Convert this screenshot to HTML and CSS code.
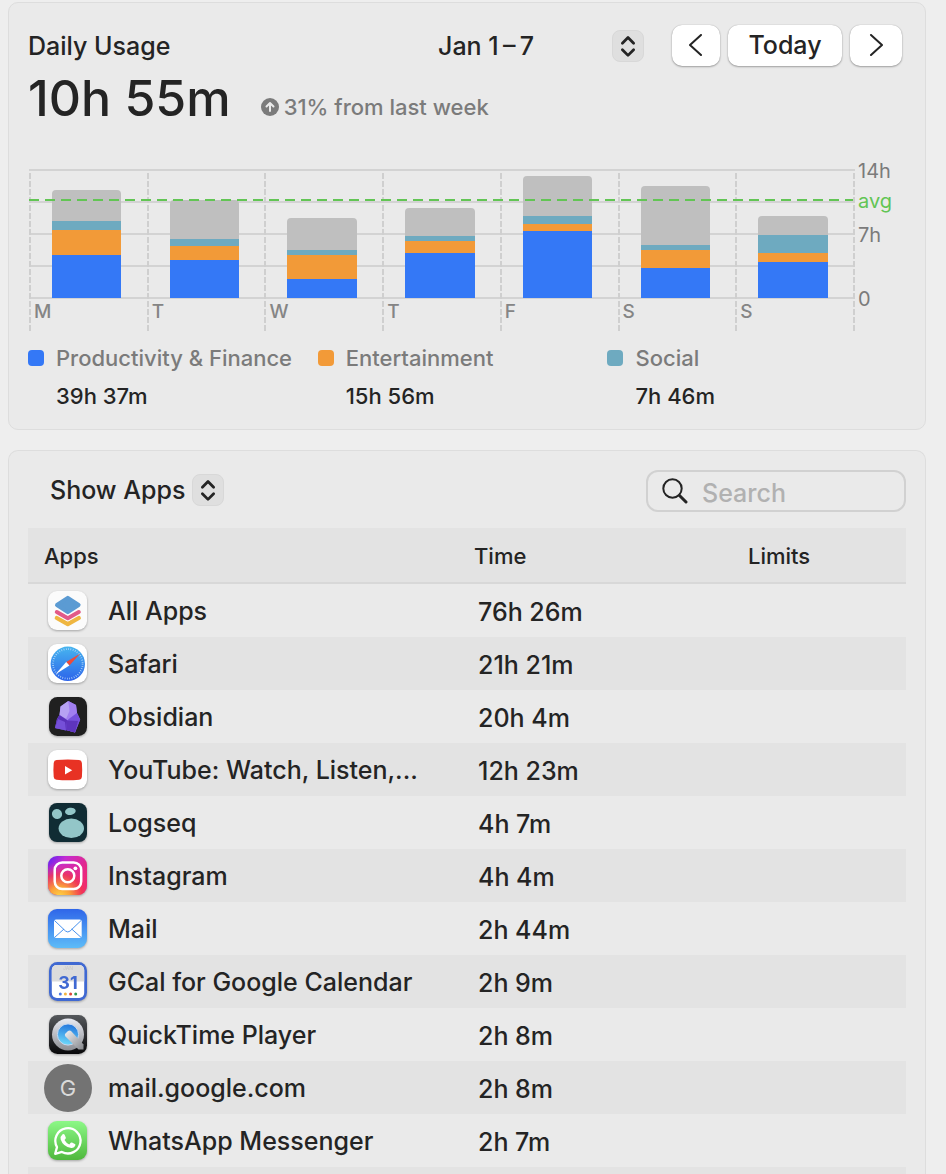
FILE: index.html
```html
<!DOCTYPE html>
<html lang="en">
<head>
<meta charset="utf-8">
<meta name="viewport" content="width=device-width, initial-scale=1">
<title>Screen Time</title>
<link rel="stylesheet" href="styles.css">
</head>
<body>
<section class="card usage">
  <header class="usage-head">
    <h1 class="title">Daily Usage</h1>
    <div class="popup popup-week">
      <select class="popup-select" aria-label="Week"><option>Jan 1&#8201;–&#8201;7</option></select>
      <svg class="stepper" viewBox="0 0 32 32" aria-hidden="true"><path d="M10 13l6-6 6 6M10 20l6 6 6-6"/></svg>
    </div>
    <nav class="pager" aria-label="Week navigation">
      <button class="btn btn-prev" aria-label="Previous week"><svg class="chevron" viewBox="0 0 14 22"><path d="M12 1L1 11l11 10"/></svg></button>
      <button class="btn btn-today">Today</button>
      <button class="btn btn-next" aria-label="Next week"><svg class="chevron" viewBox="0 0 14 22"><path d="M2 1l11 10L2 21"/></svg></button>
    </nav>
  </header>
  <div class="summary">
    <strong class="total">10h 55m</strong>
    <span class="delta"><svg class="delta-icon" viewBox="0 0 18 18" aria-hidden="true"><circle cx="9" cy="9" r="9"/><path d="M9 13V5M5.500 8.500L9 5l3.500 3.500"/></svg>31% from last week</span>
  </div>

  <div class="chart">
    <div class="plot">
      <div class="day"><div class="bar"><i class="other" style="height:31px"></i><i class="social" style="height:9px"></i><i class="fun" style="height:25px"></i><i class="work" style="height:43px"></i></div><span class="day-name">M</span></div>
      <div class="day"><div class="bar"><i class="other" style="height:39px"></i><i class="social" style="height:7px"></i><i class="fun" style="height:14px"></i><i class="work" style="height:38px"></i></div><span class="day-name">T</span></div>
      <div class="day"><div class="bar"><i class="other" style="height:32px"></i><i class="social" style="height:5px"></i><i class="fun" style="height:24px"></i><i class="work" style="height:19px"></i></div><span class="day-name">W</span></div>
      <div class="day"><div class="bar"><i class="other" style="height:28px"></i><i class="social" style="height:5px"></i><i class="fun" style="height:12px"></i><i class="work" style="height:45px"></i></div><span class="day-name">T</span></div>
      <div class="day"><div class="bar"><i class="other" style="height:40px"></i><i class="social" style="height:8px"></i><i class="fun" style="height:7px"></i><i class="work" style="height:67px"></i></div><span class="day-name">F</span></div>
      <div class="day"><div class="bar"><i class="other" style="height:59px"></i><i class="social" style="height:5px"></i><i class="fun" style="height:18px"></i><i class="work" style="height:30px"></i></div><span class="day-name">S</span></div>
      <div class="day"><div class="bar"><i class="other" style="height:19px"></i><i class="social" style="height:18px"></i><i class="fun" style="height:9px"></i><i class="work" style="height:36px"></i></div><span class="day-name">S</span></div>
      <div class="average"></div>
    </div>
    <div class="scale"><span>14h</span><span class="avg-label">avg</span><span class="scale-mid">7h</span><span class="scale-zero">0</span></div>
  </div>

  <dl class="legend">
    <div class="legend-item"><dt><i class="swatch work"></i>Productivity &amp; Finance</dt><dd>39h 37m</dd></div>
    <div class="legend-item"><dt><i class="swatch fun"></i>Entertainment</dt><dd>15h 56m</dd></div>
    <div class="legend-item"><dt><i class="swatch social"></i>Social</dt><dd>7h 46m</dd></div>
  </dl>
</section>

<section class="card apps">
  <div class="toolbar">
    <div class="popup popup-show">
      <select class="popup-select" aria-label="Show"><option>Show Apps</option></select>
      <svg class="stepper" viewBox="0 0 32 32" aria-hidden="true"><path d="M10 13l6-6 6 6M10 20l6 6 6-6"/></svg>
    </div>
    <label class="search">
      <svg class="search-icon" viewBox="0 0 26 26" aria-hidden="true"><circle cx="10.500" cy="10.500" r="9.200"/><path class="handle" d="M17.500 17.500l6.500 6.500"/></svg>
      <input class="search-input" type="search" placeholder="Search" aria-label="Search">
    </label>
  </div>

  <table class="table">
    <colgroup><col class="col-app"><col class="col-time"><col class="col-limit"></colgroup>
    <thead><tr><th>Apps</th><th>Time</th><th>Limits</th></tr></thead>
    <tbody>
      <tr><td><div class="app"><svg class="icon" viewBox="0 0 40 40" aria-hidden="true">
        <rect width="39" height="39" rx="9" fill="#fbfbfb"/>
        <path d="M8.800 27l11 6.200 11-6.200" fill="none" stroke="#efb640" stroke-width="4.200" stroke-linecap="round" stroke-linejoin="round"/>
        <path d="M8.500 20l11.300 6.800L31.100 20" fill="none" stroke="#fbfbfb" stroke-width="6.500" stroke-linecap="round" stroke-linejoin="round"/>
        <path d="M8.800 21l11 6.200 11-6.200" fill="none" stroke="#e25a88" stroke-width="4" stroke-linecap="round" stroke-linejoin="round"/>
        <path d="M8.500 14l11.300-7 11.300 7-11.300 7.500z" fill="#5b9bd3" stroke="#fbfbfb" stroke-width="5.500" stroke-linejoin="round"/>
        <path d="M9 14l10.800-7.200L30.600 14l-10.800 7.200z" fill="#5b9bd3" stroke="#5b9bd3" stroke-width="4" stroke-linejoin="round"/>
      </svg>All Apps</div></td><td>76h 26m</td><td></td></tr>
      <tr><td><div class="app"><svg class="icon" viewBox="0 0 40 40" aria-hidden="true">
        <defs><linearGradient id="safari" x1="0" y1="0" x2="0" y2="1"><stop offset="0" stop-color="#47b5ef"/><stop offset="1" stop-color="#2c63ea"/></linearGradient></defs>
        <rect width="39" height="39" rx="9" fill="#fff"/><circle cx="19.800" cy="19.800" r="17.200" fill="url(#safari)"/>
        <circle cx="19.800" cy="19.800" r="14.800" fill="none" stroke="#b9dcfb" stroke-width="1.800" stroke-dasharray=".7 1.624"/>
        <path d="M32.300 9.500L18.200 17.900l3.200 3.700z" fill="#ee4b3c"/><path d="M7.500 30.200l10.700-12.300 3.200 3.700z" fill="#fff"/>
      </svg>Safari</div></td><td>21h 21m</td><td></td></tr>
      <tr><td><div class="app"><svg class="icon" viewBox="0 0 40 40" aria-hidden="true">
        <rect x="1" width="38" height="39" rx="8.500" fill="#202020"/>
        <path d="M20.300 4L28 8l1 8 3.200 6.500-5.200 13-9-2.500L7 31l2-9 2.500-4 1-8.500z" fill="#8f6fe6"/>
        <path d="M20.300 4L12.500 9.500l-1 8.500 8.500 5 3-8.500z" fill="#b7a2f3"/>
        <path d="M20.300 4L28 8l1 8-9.500 6.800-1.500-.8 3.500-8z" fill="#a17ff0"/>
        <path d="M11.500 18L9 22l-2 9 11 2.500 2.500-9.500z" fill="#5931b8"/>
        <path d="M7 31l3-9 7 3 1 8.500z" fill="#7550d8"/>
        <path d="M29 16l3.200 6.500L27 35.500 18 33l1-9.500z" fill="#7650dc"/><path d="M19 23.500l11 .5-3 11.500-9-2.500z" fill="#5e35be"/>
      </svg>Obsidian</div></td><td>20h 4m</td><td></td></tr>
      <tr><td><div class="app"><svg class="icon" viewBox="0 0 40 40" aria-hidden="true">
        <rect width="39" height="39" rx="9" fill="#fff"/><path d="M8.500 10q11.300-1 22.600 0 2.500.2 2.800 3 .6 7 0 14-.3 2.600-2.800 2.800-11.300 1-22.600 0-2.500-.2-2.800-2.800-.6-7 0-14 .3-2.800 2.800-3z" fill="#e83224"/><path d="M17 16v8.500l7.200-4.200z" fill="#fff"/>
      </svg>YouTube: Watch, Listen,...</div></td><td>12h 23m</td><td></td></tr>
      <tr><td><div class="app"><svg class="icon" viewBox="0 0 40 40" aria-hidden="true">
        <rect x="1" width="38" height="39" rx="8" fill="#102c34"/><g fill="#93c6c8"><ellipse cx="23.300" cy="25.300" rx="12.700" ry="9.700"/><ellipse cx="9" cy="11" rx="5.200" ry="5" transform="rotate(40 9 11)"/><ellipse cx="22.300" cy="8.400" rx="5.400" ry="3.600" transform="rotate(-10 22 8)"/></g>
      </svg>Logseq</div></td><td>4h 7m</td><td></td></tr>
      <tr><td><div class="app"><svg class="icon" viewBox="0 0 40 40" aria-hidden="true">
        <defs><linearGradient id="insta" x1="0" y1="0" x2="1" y2=".6"><stop offset="0" stop-color="#5b22f5"/><stop offset=".35" stop-color="#c42bd0"/><stop offset="1" stop-color="#f0286f"/></linearGradient><radialGradient id="insta-glow" cx=".3" cy="1.050" r=".9"><stop offset="0" stop-color="#ffd545"/><stop offset=".3" stop-color="#fba03a"/><stop offset=".65" stop-color="#f2384f" stop-opacity=".8"/><stop offset="1" stop-color="#e62a9a" stop-opacity="0"/></radialGradient></defs>
        <rect width="39" height="39" rx="9" fill="url(#insta)"/><rect width="39" height="39" rx="9" fill="url(#insta-glow)"/>
        <g fill="none" stroke="#fff" stroke-width="2.500"><rect x="6.700" y="6.500" width="26.500" height="26.500" rx="7.500"/><circle cx="19.800" cy="19.800" r="6.500"/></g><circle cx="27.400" cy="12.300" r="1.900" fill="#fff"/>
      </svg>Instagram</div></td><td>4h 4m</td><td></td></tr>
      <tr><td><div class="app"><svg class="icon" viewBox="0 0 40 40" aria-hidden="true">
        <defs><linearGradient id="mail" x1="0" y1="0" x2="0" y2="1"><stop offset="0" stop-color="#2f66e9"/><stop offset="1" stop-color="#5dbcf8"/></linearGradient></defs>
        <rect width="39" height="39" rx="9" fill="url(#mail)"/><rect x="6" y="10.500" width="27.700" height="18.500" rx="2" fill="#fff"/><path d="M6.500 11.500L17.500 22q2.300 2 4.600 0l11-10.500M6.500 28.500l9.500-8.500M33.200 28.500L23.700 20" fill="none" stroke="#4791ee" stroke-width="1"/>
      </svg>Mail</div></td><td>2h 44m</td><td></td></tr>
      <tr><td><div class="app"><svg class="icon" viewBox="0 0 40 40" aria-hidden="true">
        <rect x="1" width="38" height="39" rx="8.500" fill="#4069d2"/><rect x="3.800" y="3" width="32.400" height="33" rx="5" fill="#fff"/><path d="M3.800 19.500V8a5 5 0 0 1 5-5h22.400a5 5 0 0 1 5 5v11.500z" fill="#dcdcdc"/>
        <text x="20" y="8" text-anchor="middle" class="cal-month">JAN</text><text x="20" y="27" text-anchor="middle" class="cal-day">31</text>
        <circle cx="12.300" cy="32" r="1.500" fill="#4d7be6"/><circle cx="17.400" cy="32" r="1.500" fill="#f3b43e"/><circle cx="22.600" cy="32" r="1.500" fill="#dc4437"/><circle cx="27.700" cy="32" r="1.500" fill="#2f9850"/>
      </svg>GCal for Google Calendar</div></td><td>2h 9m</td><td></td></tr>
      <tr><td><div class="app"><svg class="icon" viewBox="0 0 40 40" aria-hidden="true">
        <defs><linearGradient id="qt-bg" x1="0" y1="0" x2="0" y2="1"><stop offset="0" stop-color="#55585c"/><stop offset="1" stop-color="#08080a"/></linearGradient><linearGradient id="qt-ring" x1="0" y1="0" x2="0" y2="1"><stop offset="0" stop-color="#e9ebf3"/><stop offset="1" stop-color="#8c8e93"/></linearGradient><linearGradient id="qt-blue" x1=".5" y1="0" x2=".3" y2="1"><stop offset="0" stop-color="#2375dc"/><stop offset="1" stop-color="#6fdcfb"/></linearGradient><linearGradient id="qt-tail" x1="0" y1="0" x2="1" y2="1"><stop offset="0" stop-color="#f0f1f4"/><stop offset="1" stop-color="#85878b"/></linearGradient></defs>
        <rect x="1" width="38" height="39" rx="8.500" fill="url(#qt-bg)"/><circle cx="20" cy="19.500" r="16" fill="url(#qt-ring)"/><circle cx="20" cy="19.500" r="10.600" fill="url(#qt-blue)" stroke="#c5d8f2" stroke-width="1"/>
        <path d="M17 19l3-3q2-1 3.500.5L35.500 29.500v5h-5L17.500 21.500q-1-1.200-.5-2.500z" fill="url(#qt-tail)"/>
      </svg>QuickTime Player</div></td><td>2h 8m</td><td></td></tr>
      <tr><td><div class="app"><span class="site-badge" aria-hidden="true">G</span>mail.google.com</div></td><td>2h 8m</td><td></td></tr>
      <tr><td><div class="app"><svg class="icon" viewBox="0 0 40 40" aria-hidden="true">
        <defs><linearGradient id="whatsapp" x1="0" y1="0" x2="0" y2="1"><stop offset="0" stop-color="#8cf887"/><stop offset="1" stop-color="#4fb83d"/></linearGradient></defs>
        <rect width="39" height="39" rx="9" fill="url(#whatsapp)"/><path d="M7.200 32.800l1.800-6.700a12.600 12.600 0 1 1 4.900 4.800z" fill="none" stroke="#fff" stroke-width="2.300" stroke-linejoin="round"/>
        <path d="M14.600 13.200q1.300-.8 2 .5l1.200 2.800q.2.700-.3 1.300l-1 1.200q1.600 3 4.800 4.400l1.400-1.600q.6-.6 1.300-.3l2.900 1.400q.8.400.5 1.400-.9 3-4.200 2.600Q15 25.500 12.700 18.400q-.6-3.200 1.900-5.200z" fill="#fff"/>
      </svg>WhatsApp Messenger</div></td><td>2h 7m</td><td></td></tr>
      <tr><td></td><td></td><td></td></tr>
    </tbody>
  </table>
</section>
</body>
</html>
```
FILE: styles.css
```css
* { box-sizing: border-box; }
body {
  margin: 0;
  height: 100vh;
  padding: 2px 20px 0 8px;
  display: flex;
  flex-direction: column;
  gap: 20px;
  overflow: hidden;
  background: #eeeeee;
  color: #242424;
  font-family: Inter, "Liberation Sans", sans-serif;
  font-size: 25px;
  font-weight: 450;
}
select, button, input { font: inherit; color: inherit; }
.card {
  background: #eaeaea;
  border: 1px solid #dddddd;
  border-radius: 10px;
  padding: 0 19px;
}
.usage { flex: none; padding-top: 22px; padding-bottom: 18px; }
.apps { flex: 1; overflow: hidden; border-bottom: 0; border-radius: 10px 10px 0 0; padding-top: 19px; }

.usage-head { display: flex; align-items: center; height: 41px; padding-right: 4px; }
.title { margin: 0 auto 0 0; font-size: 25px; font-weight: 450; line-height: 30px; }
.popup { position: relative; display: flex; align-items: center; }
.popup-week { width: 206px; }
.popup-show { width: 174px; }
.popup-select {
  width: 100%;
  height: 32px;
  appearance: none;
  border: 0;
  padding: 0;
  background: transparent;
  outline-offset: 2px;
}
.stepper {
  position: absolute;
  right: 0;
  width: 32px;
  height: 32px;
  border: 1px solid #d8d8d8;
  border-radius: 8px;
  background: #dfdfdf;
  pointer-events: none;
}
.stepper path { fill: none; stroke: #242424; stroke-width: 3; stroke-linecap: round; stroke-linejoin: round; }
.pager { display: flex; gap: 8px; margin-left: 28px; }
.btn {
  height: 41px;
  padding: 0 0 2px;
  display: flex;
  align-items: center;
  justify-content: center;
  border: 0;
  border-radius: 10px;
  background: #ffffff;
  box-shadow: 0 0 1px rgba(0, 0, 0, .3), 0 1px 2px rgba(0, 0, 0, .3);
}
.btn-prev { width: 48px; }
.btn-today { width: 114px; }
.btn-next { width: 52px; }
.chevron { width: 14px; height: 22px; }
.chevron path { fill: none; stroke: #242424; stroke-width: 2; stroke-linecap: round; stroke-linejoin: round; }

.summary { display: flex; align-items: baseline; gap: 30px; height: 103px; line-height: 64px; }
.total { font-size: 50px; font-weight: 450; }
.delta { display: flex; align-items: center; gap: 5px; font-size: 22px; color: #7b7b7b; }
.delta-icon { width: 18px; height: 18px; }
.delta-icon circle { fill: #7b7b7b; }
.delta-icon path { fill: none; stroke: #eaeaea; stroke-width: 2; stroke-linecap: round; stroke-linejoin: round; }

.chart { display: flex; }
.plot {
  position: relative;
  flex: 1;
  display: grid;
  grid-template-columns: repeat(7, 1fr);
  height: 162px;
  margin-left: 1px;
  padding-right: 2px;
  background: repeating-linear-gradient(#d3d3d3 0 2px, transparent 2px 32px) top / 100% 130px no-repeat;
}
.plot::after { content: ""; position: absolute; right: 0; top: 4px; bottom: 0; width: 2px; background: repeating-linear-gradient(#cfcfcf 0 6px, transparent 6px 8px); }
.day {
  display: flex;
  flex-direction: column;
  background: repeating-linear-gradient(#cfcfcf 0 6px, transparent 6px 8px) 0 4px / 2px 158px no-repeat;
}
.bar { width: 59%; height: 129px; margin-left: 23px; display: flex; flex-direction: column; justify-content: flex-end; }
.bar i:first-child { border-radius: 4px 4px 0 0; }
.day-name { padding-left: 5px; font-size: 19px; line-height: 27px; color: #858585; }
.average {
  position: absolute;
  left: 0;
  right: 0;
  top: 30px;
  height: 2px;
  background: repeating-linear-gradient(90deg, #62c554 0 10px, transparent 10px 16px);
}
.other { background: #bfbfbf; }
.social { background: #6eaac0; }
.fun { background: #f29a38; }
.work { background: #3478f6; }
.scale { width: 51px; padding-left: 3px; display: flex; flex-direction: column; font-size: 20px; line-height: 30px; margin-top: -13px; color: #7b7b7b; font-weight: 400; }
.avg-label { color: #62c554; }
.scale-mid { margin-top: 4px; }
.scale-zero { margin-top: 34px; }

.legend { display: flex; margin: 12px 0 0; font-size: 22px; line-height: 30px; }
.legend-item { flex: 0 0 33%; }
.legend dt { display: flex; align-items: center; gap: 12px; color: #7b7b7b; }
.legend dd { margin: 8px 0 0 28px; }
.swatch { width: 16px; height: 16px; border-radius: 4px; }

.toolbar { display: flex; align-items: flex-start; justify-content: space-between; height: 42px; padding-left: 22px; margin-bottom: 16px; }
.popup-show { height: 40px; }
.search {
  display: flex;
  align-items: center;
  gap: 14px;
  width: 260px;
  height: 42px;
  padding: 0 14px;
  border: 2px solid #d1d1d1;
  border-radius: 12px;
}
.search-icon { flex: none; width: 26px; height: 26px; }
.search-icon circle { fill: none; stroke: #242424; stroke-width: 2; }
.search-icon .handle { fill: none; stroke: #242424; stroke-width: 3; stroke-linecap: round; }
.search-input { min-width: 0; width: 100%; padding: 3px 0 0; border: 0; background: transparent; outline: 0; appearance: none; }
.search-input::placeholder { color: #b1b1b1; opacity: 1; }

.table { width: 100%; table-layout: fixed; border-collapse: separate; border-spacing: 0; }
.col-app { width: 446px; }
.col-time { width: 274px; }
.table th { height: 56px; padding: 2px 0 0; text-align: left; font-size: 22px; font-weight: 450; background: #e3e3e3; border-bottom: 2px solid #d8d8d8; }
.table th:first-child { padding-left: 16px; }
.table td { height: 53px; padding: 2px 0 0 4px; }
.table td:first-child { padding: 0 0 0 20px; }
.table tbody tr:nth-child(even) { background: #e3e3e3; }
.app { display: flex; align-items: center; gap: 20px; white-space: nowrap; }
.icon { flex: none; width: 40px; height: 40px; filter: drop-shadow(0 1px 1px rgba(0, 0, 0, .3)); }
.cal-month { font-size: 5px; fill: #c9c9c9; }
.cal-day { font-size: 18px; font-weight: 700; fill: #4069d2; }
.site-badge {
  flex: none;
  width: 48px;
  height: 48px;
  margin: 0 -4px;
  border-radius: 50%;
  display: flex;
  align-items: center;
  justify-content: center;
  background: #737373;
  color: #d9d9d9;
  font-size: 22px;
  font-weight: 400;
}
```
